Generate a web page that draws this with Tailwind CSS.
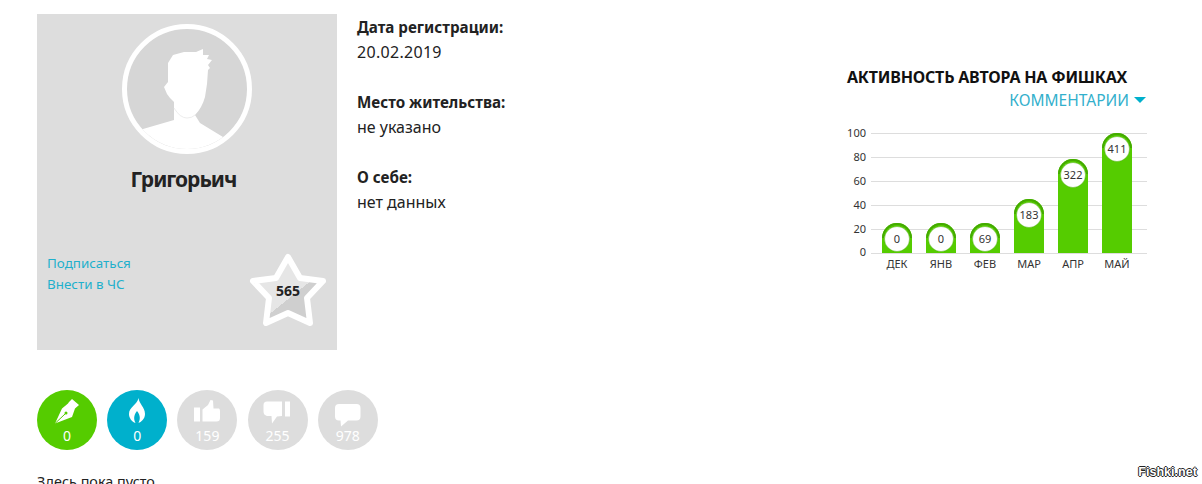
<!DOCTYPE html>
<html lang="ru">
<head>
<meta charset="UTF-8">
<script src="https://cdn.jsdelivr.net/npm/@tailwindcss/browser@4"></script>
<title>Григорьич</title>
</head>
<body class="bg-white">
<div class="relative h-[484px] w-[1202px] overflow-hidden pl-[37px] pt-[14px] font-['Noto_Sans',sans-serif] text-[#222]">
  <div class="flex">
    <!-- profile card -->
    <div class="h-[336px] w-[300px] shrink-0 bg-[#dddddd]">
      <svg class="mx-auto mt-[10px] block" width="130" height="130" viewBox="0 0 130 130">
        <defs><clipPath id="av"><circle cx="65" cy="65" r="60"/></clipPath></defs>
        <circle cx="65" cy="65" r="60" fill="#d6d6d6"/>
        <path clip-path="url(#av)" fill="#fff" d="M81 25 L74 28 L62 28 L51 31 L46 39 L46 58 L42 63 L45 70 L48 74 L52 78 L52 96 L21 105 L5 112 L5 130 L125 130 L125 122 L101 113 L78 99 L73 91 Q80 84 83 73 L85 60 L86 46 L88 44 L86 41 L90 36 L85 35 L87 31 L81 31 Z"/>
        <path fill="none" stroke="#ededed" stroke-width="1" d="M52 84 Q58 94 65 94 Q70 94 73 91"/>
        <circle cx="65" cy="65" r="62.500" fill="none" stroke="#fff" stroke-width="5"/>
      </svg>
      <div class="mt-[10px] pr-[7px] text-center text-[21px] leading-[30px] font-bold tracking-[-1px]">Григорьич</div>
      <div class="mt-[59px] flex justify-between pr-[8px] pl-[10px]">
        <div class="text-[13.400px] leading-[21px] text-[#1fb0cc]">
          <div>Подписаться</div>
          <div>Внести в ЧС</div>
        </div>
        <svg width="82" height="76" viewBox="0 0 82 76">
          <defs>
            <linearGradient id="st" gradientUnits="userSpaceOnUse" x1="42" y1="45.350" x2="75.300" y2="87">
              <stop offset="0" stop-color="#e6e6e6"/>
              <stop offset="0" stop-color="#cfcfcf"/>
            </linearGradient>
          </defs>
          <path d="M41 4 L53 25 L76 28 L60 45 L63 70 L41 60 L19 70 L22 45 L6 28 L29 25 Z" fill="url(#st)" stroke="#fff" stroke-width="6" stroke-linejoin="round"/>
          <text x="41" y="43" text-anchor="middle" font-size="14" font-weight="700" fill="#222">565</text>
        </svg>
      </div>
    </div>
    <!-- about -->
    <div class="ml-[20px] flex-1 pt-px text-[16px] leading-[25px]">
      <div class="mb-[25px]"><div class="text-[15.200px] font-bold">Дата регистрации:</div><div class="tracking-[0.3px]">20.02.2019</div></div>
      <div class="mb-[25px]"><div class="text-[15.200px] font-bold">Место жительства:</div><div>не указано</div></div>
      <div><div class="text-[15.200px] font-bold">О себе:</div><div>нет данных</div></div>
    </div>
    <!-- activity chart -->
    <div class="mr-[55px] w-[302px] shrink-0 pt-[52px]">
      <div class="pl-[2px] text-[16px] leading-[22px] font-bold tracking-[-0.2px] text-[#111]">АКТИВНОСТЬ АВТОРА НА ФИШКАХ</div>
      <div class="mt-[1px] flex items-center justify-end gap-[5px] pr-px text-[15.500px] leading-[22px] text-[#33b0cc]">
        <span>КОММЕНТАРИИ</span>
        <span class="h-0 w-0 border-x-[6px] border-t-[6px] border-x-transparent border-t-[#00b0cc]"></span>
      </div>
      <svg class="mt-[14px] block" width="302" height="150" viewBox="845 125 302 150" font-size="11" fill="#333">
        <g stroke="#dddddd" stroke-width="1">
          <path d="M871 133.500H1147M871 157.500H1147M871 181.500H1147M871 205.500H1147M871 229.500H1147M871 253.500H1147"/>
        </g>
        <g text-anchor="end">
          <text x="866" y="137">100</text><text x="866" y="161">80</text><text x="866" y="185">60</text><text x="866" y="209">40</text><text x="866" y="233">20</text><text x="866" y="256">0</text>
        </g>
        <g fill="#55cc00">
          <path d="M882 253V238a15 15 0 0 1 30 0V253Z"/>
          <path d="M926 253V238a15 15 0 0 1 30 0V253Z"/>
          <path d="M970 253V238a15 15 0 0 1 30 0V253Z"/>
          <path d="M1014 253V214a15 15 0 0 1 30 0V253Z"/>
          <path d="M1058 253V174a15 15 0 0 1 30 0V253Z"/>
          <path d="M1102 253V148a15 15 0 0 1 30 0V253Z"/>
        </g>
        <g fill="none" stroke="#44aa00" stroke-width="2">
          <path d="M883 238a14 14 0 0 1 28 0"/>
          <path d="M927 238a14 14 0 0 1 28 0"/>
          <path d="M971 238a14 14 0 0 1 28 0"/>
          <path d="M1015 214a14 14 0 0 1 28 0"/>
          <path d="M1059 174a14 14 0 0 1 28 0"/>
          <path d="M1103 148a14 14 0 0 1 28 0"/>
        </g>
        <g fill="#fff" stroke="#3f9f00" stroke-opacity="0.4">
          <circle cx="897" cy="239" r="12.500"/><circle cx="941" cy="239" r="12.500"/><circle cx="985" cy="239" r="12.500"/>
          <circle cx="1029" cy="215" r="12.500"/><circle cx="1073" cy="175" r="12.500"/><circle cx="1117" cy="149" r="12.500"/>
        </g>
        <g text-anchor="middle">
          <text x="897" y="243">0</text><text x="941" y="243">0</text><text x="985" y="243">69</text>
          <text x="1029" y="219">183</text><text x="1073" y="179">322</text><text x="1117" y="153">411</text>
          <text x="897" y="268">ДЕК</text><text x="941" y="268">ЯНВ</text><text x="985" y="268">ФЕВ</text>
          <text x="1029" y="268">МАР</text><text x="1073" y="268">АПР</text><text x="1117" y="268">МАЙ</text>
        </g>
      </svg>
    </div>
  </div>

  <!-- counters -->
  <div class="mt-[40px] flex gap-[10.200px] text-[14px] leading-[18px] text-white">
    <div class="flex h-[60px] w-[60px] flex-col items-center rounded-full bg-[#55cc00]">
      <svg class="shrink-0" width="60" height="37" viewBox="0 0 60 37">
        <path fill="#fff" d="M35 9 L42 15 L38 18.500 L35 27 L18 33.500 L25 18.500 L31 13.500 L32 12 Z"/>
        <path stroke="#55cc00" stroke-width="1" fill="none" d="M18 33.500 L28 24"/>
        <circle cx="29" cy="23" r="1.500" fill="#55cc00"/>
      </svg>
      <span>0</span>
    </div>
    <div class="flex h-[60px] w-[60px] flex-col items-center rounded-full bg-[#00b0cc]">
      <svg class="shrink-0" width="60" height="37" viewBox="0 0 60 37">
        <path fill="#fff" d="M31.500 8 C32 14 38 17 38 24 C38 29 34 32 31.500 33 C33 30 34 26 30 21 C26 26 27 30 28.500 33 C25 32 22 28 22 24 C22 17 30 15 31.500 8 Z"/>
      </svg>
      <span>0</span>
    </div>
    <div class="flex h-[60px] w-[60px] flex-col items-center rounded-full bg-[#dddddd]">
      <svg class="shrink-0" width="60" height="37" viewBox="0 0 60 37">
        <path fill="#fff" d="M17 17.500H23V31.500H17Z M25.500 19.500 L31 15 L33.500 10 L36 10.500 L36.500 18.500 L42 18.500 Q43 19 43 21 L43 28 Q43 31.500 39.500 31.500 L25.500 31.500 Z"/>
      </svg>
      <span>159</span>
    </div>
    <div class="flex h-[60px] w-[60px] flex-col items-center rounded-full bg-[#dddddd]">
      <svg class="shrink-0" width="60" height="37" viewBox="0 0 60 37">
        <path fill="#fff" d="M37 11.500H42V26.500H37Z M34 11.500 L34 26 L29 26.500 L24 33.500 L23.500 26 L19 26 Q15.500 25 15.500 21.500 L15.500 15 Q15.500 11.500 19 11.500 Z"/>
      </svg>
      <span>255</span>
    </div>
    <div class="flex h-[60px] w-[60px] flex-col items-center rounded-full bg-[#dddddd]">
      <svg class="shrink-0" width="60" height="37" viewBox="0 0 60 37">
        <path fill="#fff" d="M21 14 H38.500 Q42.500 14 42.500 18 V26.500 Q42.500 30.500 38.500 30.500 H30 L23 36.500 L22.500 30.500 H21 Q17 30.500 17 26.500 V18 Q17 14 21 14 Z"/>
      </svg>
      <span>978</span>
    </div>
  </div>
  <div class="mt-[20px] text-[14.400px] leading-[24px]">Здесь пока пусто</div>

  <!-- watermark over the picture -->
  <div class="absolute top-[464px] right-[5px] font-['Liberation_Sans',sans-serif] text-[12.600px] leading-[16px] font-bold text-white [text-shadow:1px_0_0_#222,-1px_0_0_#222,0_1px_0_#222,0_-1px_0_#222]">Fishki.net</div>
</div>
</body>
</html>
